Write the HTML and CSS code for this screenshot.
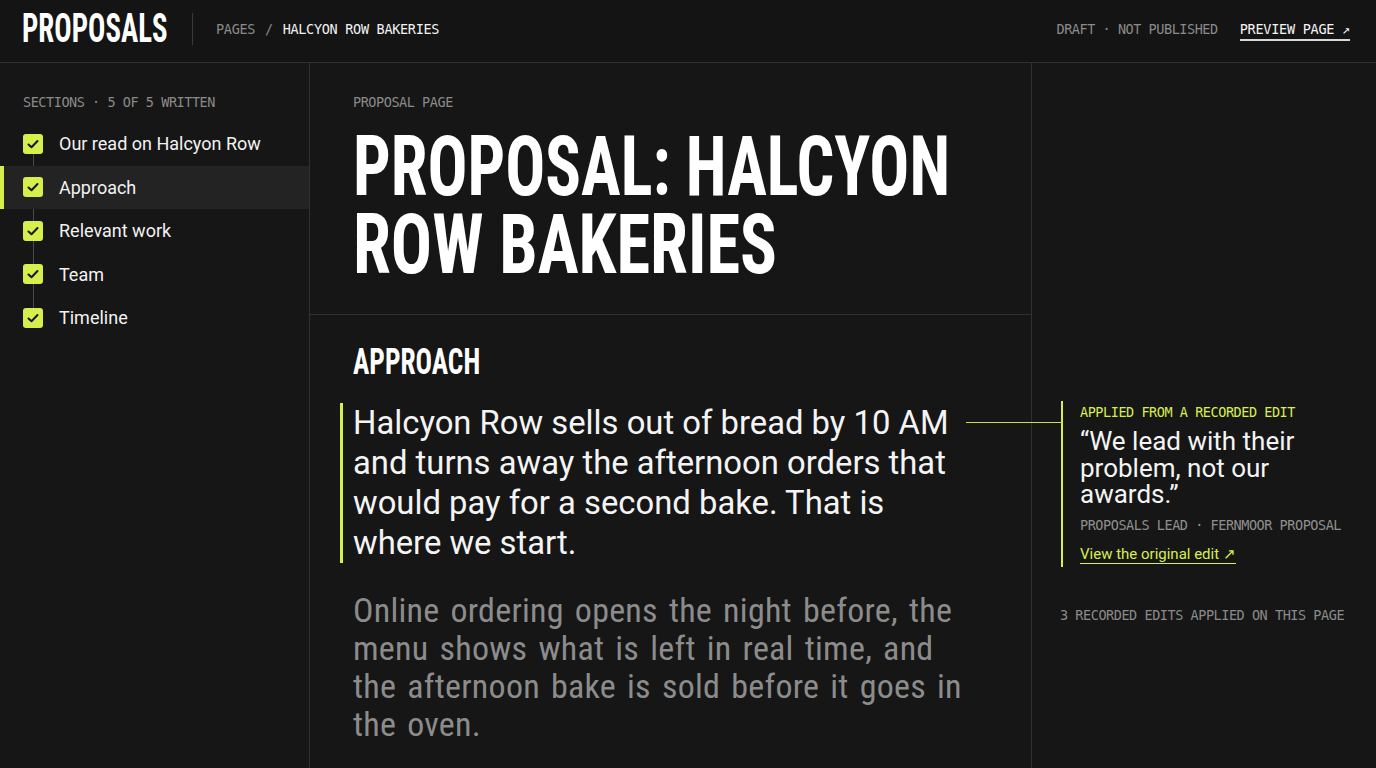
FILE: index.html
```html
<!DOCTYPE html>
<html lang="en">
<head>
<meta charset="utf-8">
<title>Proposals — Halcyon Row Bakeries</title>
<link rel="stylesheet" href="styles.css">
</head>
<body>
<header class="topbar">
  <div class="brand"><span class="squeeze">PROPOSALS</span></div>
  <div class="divider"></div>
  <nav class="crumbs"><span class="crumb-muted">PAGES</span> <span class="crumb-sep">/</span> <span class="crumb-current">HALCYON ROW BAKERIES</span></nav>
  <div class="top-right">
    <span class="status">DRAFT · NOT PUBLISHED</span>
    <a class="preview" href="#">PREVIEW PAGE ↗</a>
  </div>
</header>
<div class="layout">
  <aside class="sidebar">
    <div class="side-label">SECTIONS · 5 OF 5 WRITTEN</div>
    <ul class="sections">
      <li class="section-item"><span class="check"><svg viewBox="0 0 20 20" width="20" height="20"><polyline points="5.5,10.5 8.5,13.2 14.5,7" /></svg></span><span>Our read on Halcyon Row</span></li>
      <li class="section-item active"><span class="check"><svg viewBox="0 0 20 20" width="20" height="20"><polyline points="5.5,10.5 8.5,13.2 14.5,7" /></svg></span><span>Approach</span></li>
      <li class="section-item"><span class="check"><svg viewBox="0 0 20 20" width="20" height="20"><polyline points="5.5,10.5 8.5,13.2 14.5,7" /></svg></span><span>Relevant work</span></li>
      <li class="section-item"><span class="check"><svg viewBox="0 0 20 20" width="20" height="20"><polyline points="5.5,10.5 8.5,13.2 14.5,7" /></svg></span><span>Team</span></li>
      <li class="section-item"><span class="check"><svg viewBox="0 0 20 20" width="20" height="20"><polyline points="5.5,10.5 8.5,13.2 14.5,7" /></svg></span><span>Timeline</span></li>
    </ul>
  </aside>
  <main class="main">
    <section class="page-head">
      <div class="eyebrow">PROPOSAL PAGE</div>
      <h1 class="title"><span class="title-line">PROPOSAL: HALCYON</span><span class="title-line title-line-2">ROW BAKERIES</span></h1>
    </section>
    <section class="approach">
      <h2 class="sec-title"><span class="squeeze">APPROACH</span></h2>
      <p class="lead">Halcyon Row sells out of bread by 10 AM and turns away the afternoon orders that would pay for a second bake. That is where we start.</p>
      <p class="body">Online ordering opens the night before, the menu shows what is left in real time, and the afternoon bake is sold before it goes in the oven.</p>
    </section>
  </main>
  <aside class="notes">
    <div class="note">
      <div class="note-label">APPLIED FROM A RECORDED EDIT</div>
      <blockquote class="note-quote">“We lead with their problem, not our awards.”</blockquote>
      <div class="note-meta">PROPOSALS LEAD · FERNMOOR PROPOSAL</div>
      <a class="note-link" href="#">View the original edit ↗</a>
    </div>
    <div class="notes-count">3 RECORDED EDITS APPLIED ON THIS PAGE</div>
  </aside>
</div>
</body>
</html>
```
FILE: styles.css
```css
* { box-sizing: border-box; }
html, body { margin: 0; padding: 0; }
body {
  width: 1376px;
  height: 768px;
  overflow: hidden;
  background: #161616;
  color: #f2f2f2;
  font-family: Roboto, "Noto Sans", "Liberation Sans", sans-serif;
}
.topbar {
  height: 63px;
  border-bottom: 1px solid #303030;
  display: flex;
  align-items: center;
  padding: 0 26px 4px 22px;
  background: #141414;
}
.squeeze {
  display: inline-block;
  white-space: nowrap;
  transform-origin: left center;
}
.brand {
  width: 145px;
  white-space: nowrap;
  font-family: "Roboto Condensed", "Liberation Sans Narrow", "DejaVu Sans Condensed", sans-serif;
  font-weight: 700;
  font-size: 40px;
  color: #fff;
  line-height: 1;
}
.brand .squeeze { transform: scaleX(0.72); }
.divider {
  width: 1px;
  height: 32px;
  background: #3a3a3a;
  margin: 0 23px 0 25px;
}
.crumbs, .status, .preview, .side-label, .eyebrow, .note-label, .note-meta, .notes-count {
  font-family: "DejaVu Sans Mono", "Liberation Mono", monospace;
  font-size: 13.5px;
  letter-spacing: -0.45px;
}
.crumbs { color: #8a8a8a; letter-spacing: -0.3px; }
.crumb-sep { color: #8a8a8a; margin: 0 2px; }
.crumb-current { color: #f2f2f2; }
.top-right {
  margin-left: auto;
  display: flex;
  align-items: center;
  gap: 22px;
}
.status { color: #8a8a8a; margin-left: -3px; }
.preview {
  color: #f4f4f4;
  text-decoration: none;
  border-bottom: 2px solid #d8d8d8;
  padding-bottom: 2px;
  margin-top: 4px;
  letter-spacing: -0.25px;
}
.layout {
  display: grid;
  grid-template-columns: 310px 722px 1fr;
  height: 705px;
}
.sidebar {
  border-right: 1px solid #303030;
  padding-top: 31px;
}
.side-label {
  color: #8a8a8a;
  padding-left: 23px;
  line-height: 16px;
  margin-bottom: 12px;
}
.sections {
  list-style: none;
  margin: 0;
  padding: 0;
  position: relative;
}
.sections::before {
  content: "";
  position: absolute;
  left: 33px;
  top: 22px;
  bottom: 22px;
  width: 1px;
  background: #4a4a4a;
}
.section-item {
  position: relative;
  height: 43.5px;
  display: flex;
  align-items: center;
  gap: 16px;
  padding-left: 23px;
  font-size: 18px;
  color: #f2f2f2;
}
.section-item.active {
  background: #232323;
}
.section-item.active::before {
  content: "";
  position: absolute;
  left: 0;
  top: 0;
  bottom: 0;
  width: 4px;
  background: #d6ef4d;
}
.check {
  width: 20px;
  height: 20px;
  border-radius: 3px;
  background: #d6ef4d;
  display: inline-flex;
  position: relative;
  z-index: 1;
}
.check svg polyline {
  fill: none;
  stroke: #161616;
  stroke-width: 2;
  stroke-linecap: round;
  stroke-linejoin: round;
}
.main {
  border-right: 1px solid #303030;
}
.page-head {
  padding: 32px 40px 30px 43px;
  border-bottom: 1px solid #303030;
}
.eyebrow {
  color: #8a8a8a;
  line-height: 14px;
  margin-bottom: 19px;
}
.title {
  margin: 0;
  font-family: "Roboto Condensed", "Liberation Sans Narrow", "DejaVu Sans Condensed", sans-serif;
  font-weight: 700;
  font-size: 84px;
  line-height: 78px;
  color: #fff;
}
.title-line {
  display: block;
  white-space: nowrap;
  transform: scaleX(0.79);
  transform-origin: left center;
}
.title-line-2 { transform: scaleX(0.815); }
.approach {
  padding: 27px 60px 0 43px;
}
.sec-title {
  margin: 0;
  font-family: "Roboto Condensed", "Liberation Sans Narrow", "DejaVu Sans Condensed", sans-serif;
  font-weight: 700;
  font-size: 36px;
  line-height: 40px;
  color: #fff;
}
.sec-title .squeeze { transform: scaleX(0.76); }
.lead {
  margin: 21px 0 0 -13px;
  padding-left: 10px;
  border-left: 3px solid #d6ef4d;
  font-size: 32.8px;
  line-height: 40px;
  color: #f4f4f4;
}
.body {
  margin: 28px 0 0;
  font-family: "Roboto Condensed", "Liberation Sans Narrow", Roboto, sans-serif;
  font-size: 34px;
  letter-spacing: 0.25px;
  word-spacing: 3px;
  line-height: 38px;
  color: #8c8c8c;
}
.notes {
  padding: 338px 8px 0 28px;
}
.note {
  position: relative;
  margin-left: 1px;
  border-left: 2px solid #d6ef4d;
  padding: 3px 0 3px 17px;
}
.note::before {
  content: "";
  position: absolute;
  left: -97px;
  top: 21px;
  width: 97px;
  height: 1px;
  background: #c9e04a;
}
.note-label {
  color: #d6ef4d;
  line-height: 16px;
}
.note-quote {
  margin: 8px 0 0;
  font-size: 26px;
  line-height: 26.5px;
  color: #f4f4f4;
}
.note-meta {
  margin-top: 9px;
  color: #8f8f8f;
  line-height: 16px;
}
.note-link {
  display: inline-block;
  margin-top: 12px;
  font-size: 15px;
  line-height: 18px;
  color: #d6ef4d;
  text-decoration: none;
  border-bottom: 1px solid #d6ef4d;
}
.notes-count {
  margin-top: 40px;
  color: #8a8a8a;
  line-height: 16px;
  white-space: nowrap;
}
```
